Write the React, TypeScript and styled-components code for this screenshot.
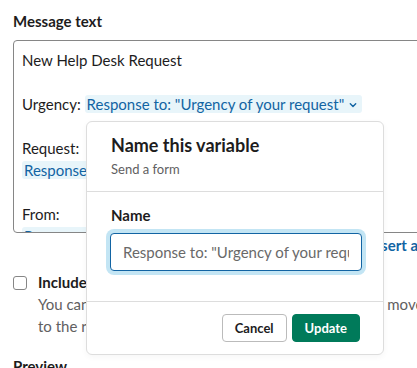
import React from "react";
import styled, { createGlobalStyle } from "styled-components";

const GlobalStyle = createGlobalStyle`
  html, body {
    margin: 0;
    padding: 0;
    background: #ffffff;
    overflow: hidden;
  }
  body {
    font-family: Lato, "Noto Sans", sans-serif;
    color: #1d1c1d;
    font-size: 15px;
    line-height: 22px;
  }
`;

const App = () => {
  return (
    <>
      <GlobalStyle />
      <Page>
        <FieldLabel>Message text</FieldLabel>
        <Editor>
          <Line>New Help Desk Request</Line>
          <Line>
            <br />
          </Line>
          <Line>
            Urgency: <VariablePill label={'Response to: "Urgency of your request"'} />
          </Line>
          <Line>
            <br />
          </Line>
          <Line>
            Request:
            <br />
            <VariablePill label={'Response to: "Describe your request"'} />
          </Line>
          <Line>
            <br />
          </Line>
          <Line>
            From:
            <br />
            <VariablePill label={'Response to: "Your name"'} />
          </Line>
        </Editor>
        <LinkRow>
          <InsertLink>Insert a variable</InsertLink>
        </LinkRow>
        <CheckRow>
          <Checkbox />
          <CheckText>
            <CheckTitle>Include a button to mark the request as done</CheckTitle>
            <Hint>
              You can let the people on the help desk team quickly move
              <br />
              to the right queue.
            </Hint>
          </CheckText>
        </CheckRow>
        <SectionTitle>Preview</SectionTitle>

        <Popover>
          <PopoverHeader>
            <PopoverTitle>Name this variable</PopoverTitle>
            <PopoverSub>Send a form</PopoverSub>
          </PopoverHeader>
          <PopoverBody>
            <InputLabel>Name</InputLabel>
            <TextInput placeholder={'Response to: "Urgency of your request"'} />
          </PopoverBody>
          <PopoverFooter>
            <Button>Cancel</Button>
            <Button $primary>Update</Button>
          </PopoverFooter>
        </Popover>
      </Page>
    </>
  );
};

export default App;

const VariablePill = ({ label }: { label: string }) => (
  <Pill>
    {label}
    <Chevron viewBox="0 0 8 8" width="8" height="8">
      <path d="M1.3 2.8 L4 5.5 L6.7 2.8" fill="none" stroke="currentColor" strokeWidth="1.4" strokeLinecap="round" strokeLinejoin="round" />
    </Chevron>
  </Pill>
);

const Page = styled.div`
  position: relative;
  width: 461px;
  padding: 10px 0 0 13px;
`;

const FieldLabel = styled.div`
  font-weight: 700;
  margin-bottom: 8px;
`;

const Editor = styled.div`
  box-sizing: border-box;
  height: 193px;
  border: 1px solid #868686;
  border-radius: 4px;
  padding: 8px;
  overflow: hidden;
`;

const Line = styled.div``;

const Pill = styled.span`
  display: inline-block;
  white-space: nowrap;
  line-height: 18px;
  background: #e8f5fa;
  color: #1264a3;
  border-radius: 3px;
  padding: 0 5px 0 2px;
`;

const Chevron = styled.svg`
  margin-left: 5px;
  vertical-align: 1px;
`;

const LinkRow = styled.div`
  display: flex;
  justify-content: flex-end;
  margin-top: 1px;
`;

const InsertLink = styled.span`
  color: #1264a3;
  font-weight: 700;
  white-space: nowrap;
`;

const CheckRow = styled.div`
  display: flex;
  align-items: flex-start;
  gap: 11px;
  margin-top: 15px;
`;

const Checkbox = styled.span`
  box-sizing: border-box;
  flex: none;
  width: 14px;
  height: 14px;
  margin-top: 5px;
  border: 1px solid #868686;
  border-radius: 3px;
  background: #fff;
`;

const CheckText = styled.div`
  display: flex;
  flex-direction: column;
  white-space: nowrap;
`;

const CheckTitle = styled.div`
  font-weight: 700;
`;

const Hint = styled.div`
  color: #616061;
`;

const SectionTitle = styled.div`
  font-weight: 700;
  margin-top: 18px;
`;

const Popover = styled.div`
  position: absolute;
  left: 86px;
  top: 121px;
  box-sizing: border-box;
  width: 298px;
  height: 234px;
  background: #ffffff;
  border: 1px solid #dddddd;
  border-radius: 6px;
  box-shadow: 0 2px 6px rgba(0, 0, 0, 0.04);
  display: flex;
  flex-direction: column;
`;

const PopoverHeader = styled.div`
  padding: 11px 24px 13px;
  border-bottom: 1px solid #dddddd;
`;

const PopoverTitle = styled.div`
  font-size: 18px;
  line-height: 24px;
  font-weight: 700;
`;

const PopoverSub = styled.div`
  margin-top: 3px;
  font-size: 13px;
  line-height: 18px;
  color: #616061;
`;

const PopoverBody = styled.div`
  flex: 1;
  padding: 12px 23px 0 23px;
  border-bottom: 1px solid #dddddd;
`;

const InputLabel = styled.div`
  font-weight: 700;
  padding-left: 1px;
  margin-bottom: 7px;
`;

const TextInput = styled.input`
  box-sizing: border-box;
  width: 252px;
  height: 38px;
  padding: 0 12px;
  font-family: Lato, "Noto Sans", sans-serif;
  font-size: 15px;
  color: #1d1c1d;
  border: 1px solid #1264a3;
  border-radius: 4px;
  box-shadow: 0 0 0 4px #c3e5f4;
  outline: none;
  &::placeholder {
    color: #696969;
  }
`;

const PopoverFooter = styled.div`
  display: flex;
  justify-content: flex-end;
  gap: 5px;
  padding: 12px 23px 12px;
`;

const Button = styled.button<{ $primary?: boolean }>`
  box-sizing: border-box;
  height: 28px;
  padding: 0 12px;
  font-family: Lato, "Noto Sans", sans-serif;
  font-size: 13px;
  font-weight: 700;
  border-radius: 4px;
  border: 1px solid ${(p) => (p.$primary ? "#007a5a" : "#bbbbbb")};
  background: ${(p) => (p.$primary ? "#007a5a" : "#ffffff")};
  color: ${(p) => (p.$primary ? "#ffffff" : "#1d1c1d")};
`;
